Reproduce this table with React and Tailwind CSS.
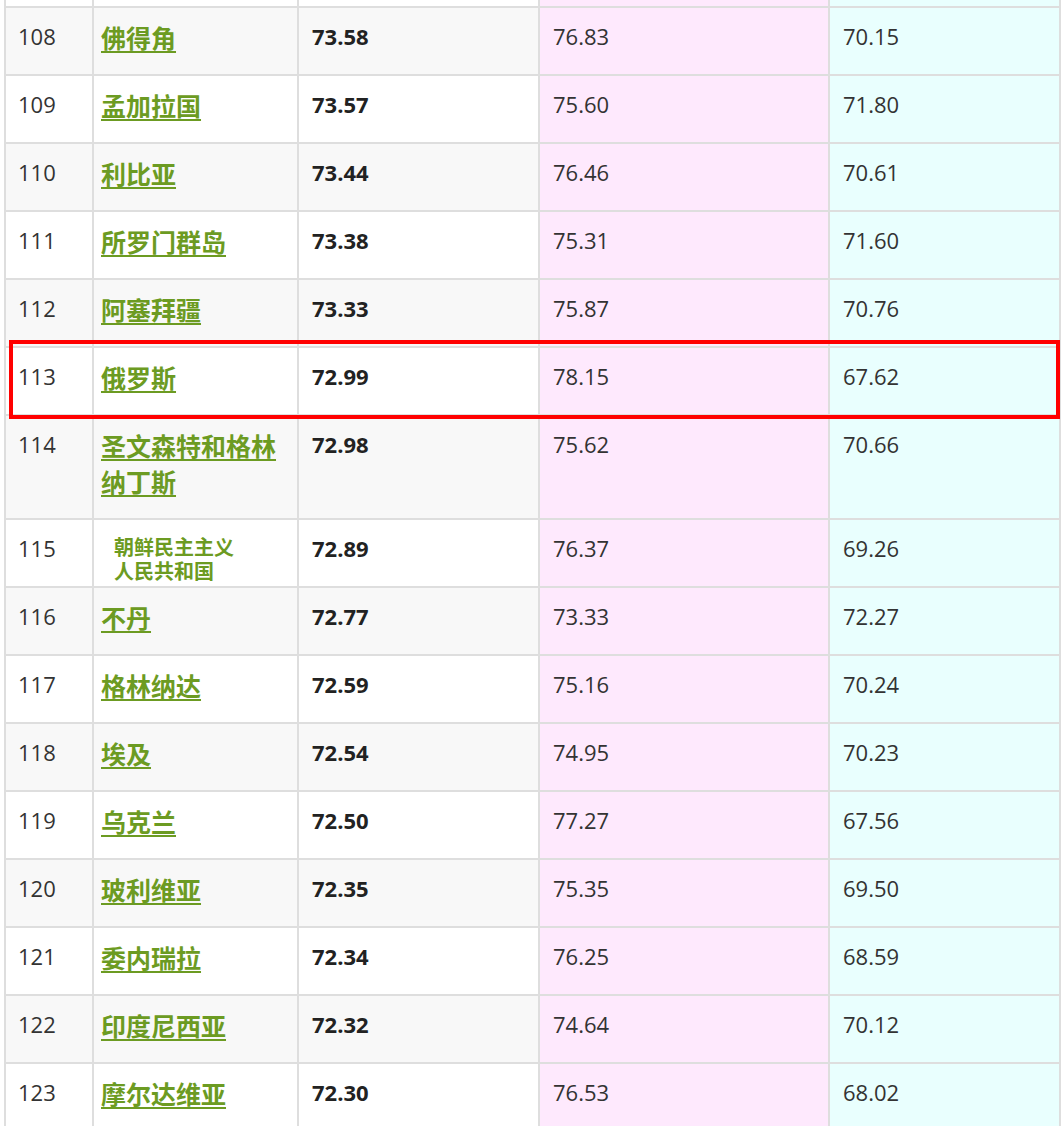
const rows = [
  ['108', '佛得角', '73.58', '76.83', '70.15'],
  ['109', '孟加拉国', '73.57', '75.60', '71.80'],
  ['110', '利比亚', '73.44', '76.46', '70.61'],
  ['111', '所罗门群岛', '73.38', '75.31', '71.60'],
  ['112', '阿塞拜疆', '73.33', '75.87', '70.76'],
  ['113', '俄罗斯', '72.99', '78.15', '67.62'],
  ['114', '圣文森特和格林纳丁斯', '72.98', '75.62', '70.66'],
  ['115', '朝鲜民主主义人民共和国', '72.89', '76.37', '69.26', 'plain'],
  ['116', '不丹', '72.77', '73.33', '72.27'],
  ['117', '格林纳达', '72.59', '75.16', '70.24'],
  ['118', '埃及', '72.54', '74.95', '70.23'],
  ['119', '乌克兰', '72.50', '77.27', '67.56'],
  ['120', '玻利维亚', '72.35', '75.35', '69.50'],
  ['121', '委内瑞拉', '72.34', '76.25', '68.59'],
  ['122', '印度尼西亚', '72.32', '74.64', '70.12'],
  ['123', '摩尔达维亚', '72.30', '76.53', '68.02'],
]

const font = { fontFamily: '"Open Sans", "Noto Sans CJK SC", sans-serif' }

function Row({ r }) {
  const [rank, name, total, female, male, kind] = r
  const even = Number(rank) % 2 === 0
  const bg = even ? 'bg-[#f8f8f8]' : 'bg-white'
  const cell = 'border-2 border-[#dedede] align-top pt-[12px] pb-[12px]'
  return (
    <tr className={rank === '114' ? 'h-[104px]' : 'h-[68px]'}>
      <td className={`${cell} ${bg} pl-[12px] text-[22px] text-[#333]`}>{rank}</td>
      {kind === 'plain' ? (
        <td className={`border-2 border-[#dedede] align-top pt-[16px] pb-0 ${bg} pl-[7px] pr-[8px]`}>
          <div className="pl-[13px] text-[20px] leading-[24px] font-bold text-[#6c9b22]">
            <div>朝鲜民主主义</div>
            <div>人民共和国</div>
          </div>
        </td>
      ) : (
        <td className={`${cell} ${bg} pl-[7px] pr-[8px]`}>
          <a className="text-[25px] leading-[36px] font-bold text-[#6c9b22] underline underline-offset-[3px] decoration-2 break-all">
            {name}
          </a>
        </td>
      )}
      <td className={`${cell} ${bg} pl-[13px] text-[22px] font-bold text-[#222]`}>{total}</td>
      <td className={`${cell} bg-[#fee9fd] pl-[13px] text-[22px] text-[#333]`}>{female}</td>
      <td className={`${cell} bg-[#e9fffe] pl-[13px] text-[22px] text-[#333]`}>{male}</td>
    </tr>
  )
}

export default function App() {
  return (
    <div className="w-[1064px] h-[1126px] overflow-hidden bg-white relative" style={font}>
      <table className="table-fixed border-collapse w-[1055px] ml-[4px] -mt-[2px]">
        <colgroup>
          <col className="w-[88px]" />
          <col className="w-[205px]" />
          <col className="w-[241px]" />
          <col className="w-[290px]" />
          <col className="w-[231px]" />
        </colgroup>
        <tbody>
          <tr className="h-[8px]">
            <td className="border-2 border-[#dedede] bg-white" />
            <td className="border-2 border-[#dedede] bg-white" />
            <td className="border-2 border-[#dedede] bg-white" />
            <td className="border-2 border-[#dedede] bg-[#fee9fd]" />
            <td className="border-2 border-[#dedede] bg-[#e9fffe]" />
          </tr>
          {rows.map(r => (
            <Row key={r[0]} r={r} />
          ))}
        </tbody>
      </table>
      <div className="absolute left-[9px] top-[340px] w-[1051px] h-[79px] border-4 border-[#ff0000]" />
    </div>
  )
}
